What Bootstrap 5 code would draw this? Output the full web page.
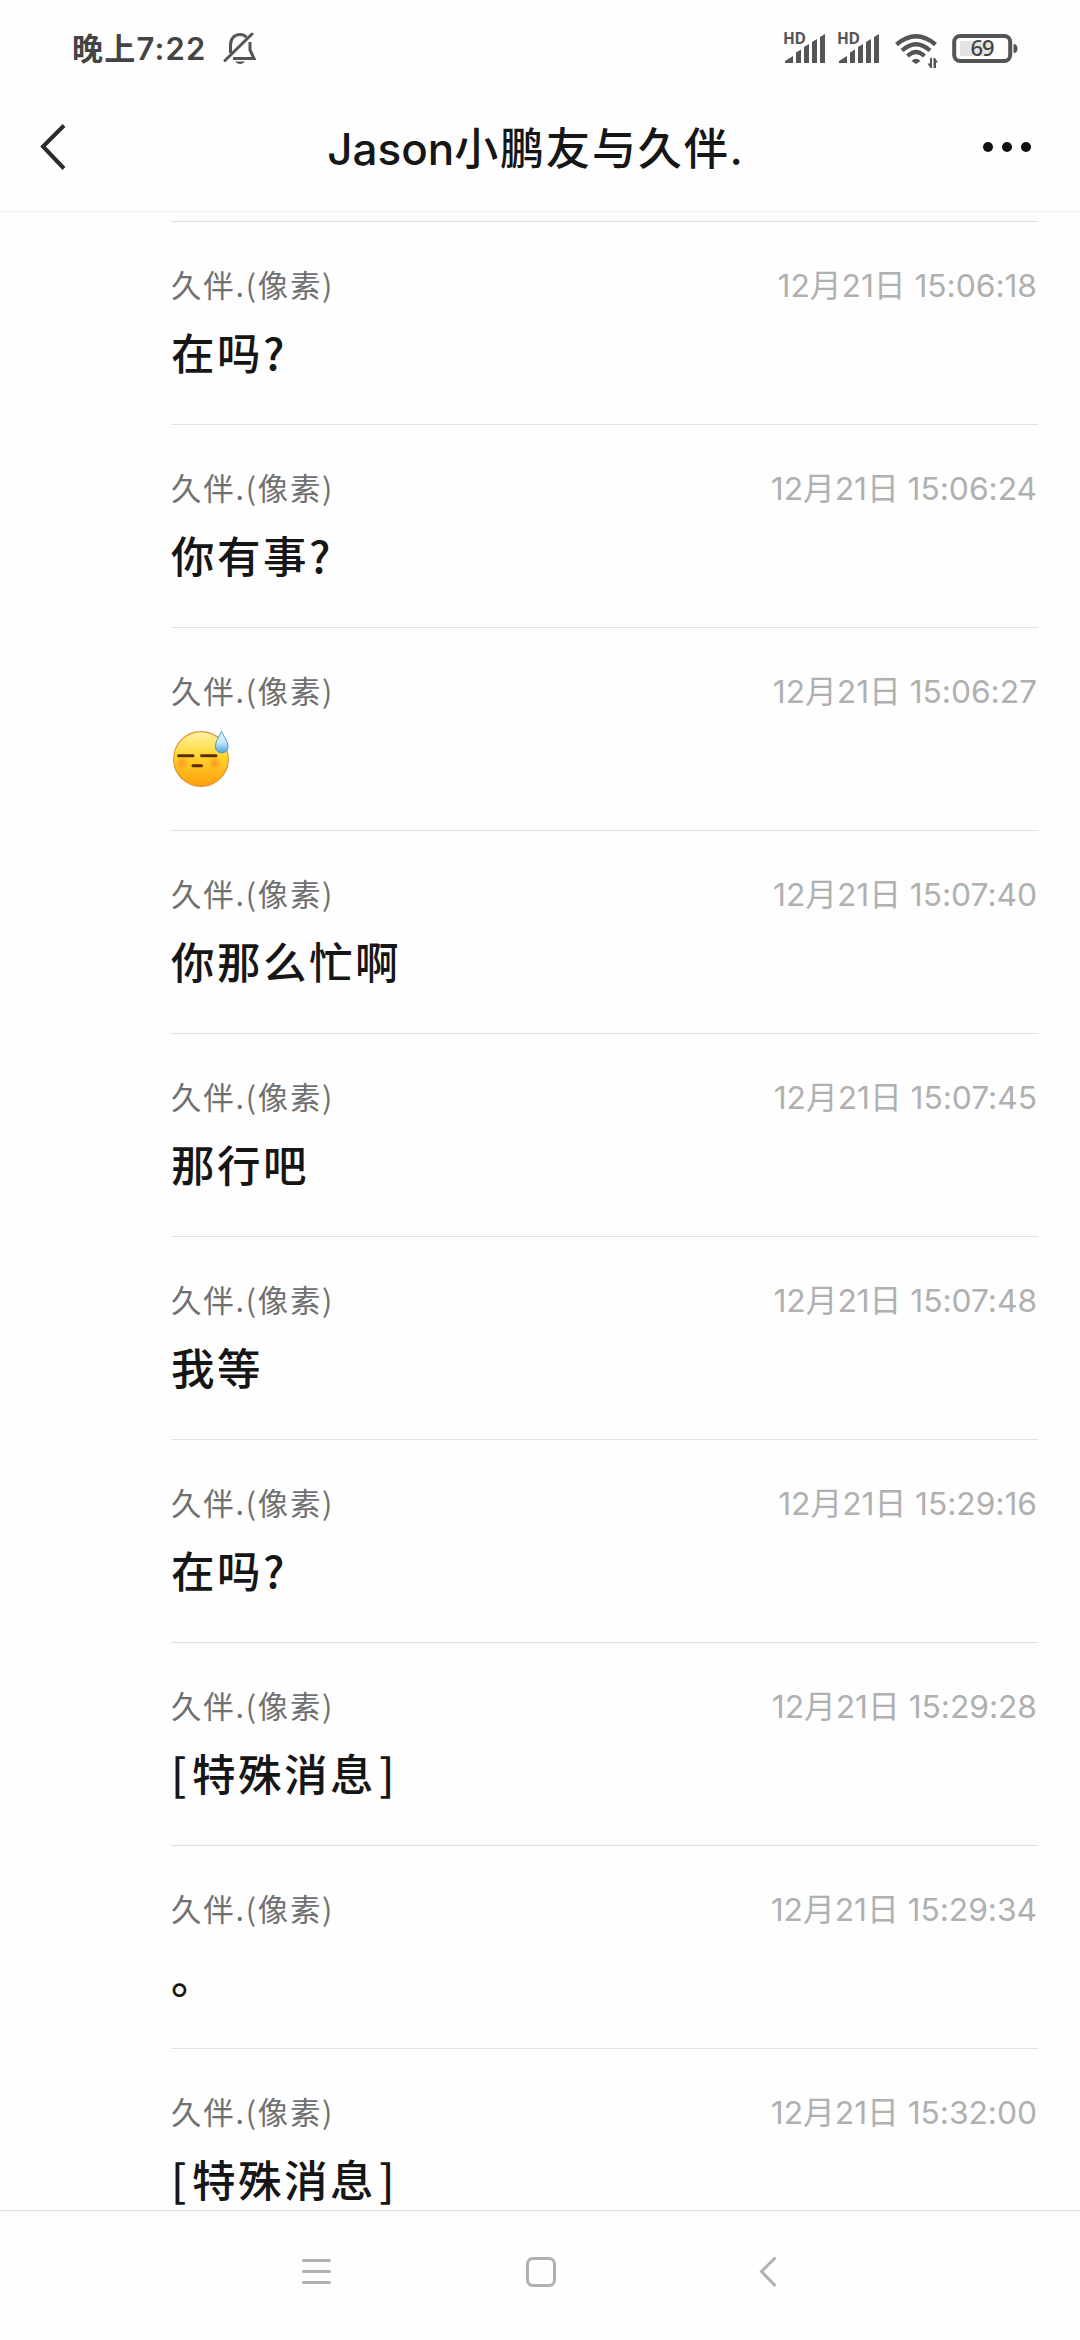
<!DOCTYPE html>
<html lang="zh-CN">
<head>
<meta charset="utf-8">
<meta name="viewport" content="width=device-width, initial-scale=1">
<title>Jason小鹏友与久伴.</title>
<link href="https://cdn.jsdelivr.net/npm/bootstrap@5.3.0/dist/css/bootstrap.min.css" rel="stylesheet">
<style>
  body { background: #fefefe; color: #161616; font-family: "Inter", "Noto Sans CJK SC", sans-serif; }
  .screen { width: 1080px; height: 2340px; }
  .status { height: 96px; padding: 1px 62px 0 72px; color: #444; }
  .clock { font-size: 31px; line-height: 40px; letter-spacing: 1.2px; font-weight: 600; }
  .title-bar { height: 116px; padding: 0 48px 14px 40px; border-bottom: 1px solid #f3f3f3; }
  .title-text { font-size: 44px; line-height: 60px; letter-spacing: 1.9px; font-weight: 500; color: #161616; margin-top: 4px; }
  .latin { letter-spacing: 0; }
  .feed { padding: 9px 42px 0 171px; }
  .message { height: 203px; padding-top: 42px; border-bottom: 1px solid #e1e1e1; }
  .feed-top { height: 1px; background: #e1e1e1; }
  .sender { font-size: 30.4px; line-height: 40px; letter-spacing: 1.8px; color: #707070; font-family: "Noto Sans CJK SC", sans-serif; font-weight: 400; }
  .sent-at { font-size: 31.8px; line-height: 40px; letter-spacing: -0.05px; color: #b0b0b0; font-weight: 400; padding: 2px 1px 0 0; margin-bottom: -2px; }
  .content { font-size: 43.5px; line-height: 60px; letter-spacing: 2.5px; margin-top: 18px; font-weight: 500; font-family: "Noto Sans CJK SC", sans-serif; }
  .open-bracket { margin-right: 3px; }
  .close-bracket { margin-left: 3px; }
  .nav-keys { height: 130px; border-top: 1px solid #e1e1e1; background: #fefefe; }
</style>
</head>
<body>
<div class="screen d-flex flex-column overflow-hidden">
  <header class="status d-flex align-items-center justify-content-between flex-shrink-0">
    <div class="d-flex align-items-center">
      <span class="clock">晚上7:22</span>
      <svg class="ms-3" width="34" height="34" viewBox="0 0 34 34" fill="none" stroke="#555" stroke-width="3">
        <path d="M7.500 21V13C7.500 7 11 2.500 17 2.500c3 0 5 1 6.500 2.800M27 10v8l4 8.500H10"/>
        <path d="M2 28.500L29 2" stroke-linecap="round"/>
        <path d="M12 29.500h10q-5 5-10 0z" fill="#555" stroke="none"/>
      </svg>
    </div>
    <svg width="236" height="42" viewBox="780 27 236 42" fill="#555">
      <g id="signal">
        <text x="781" y="43" font-family="Open Sans" font-weight="700" font-size="15.500" textLength="23">HD</text>
        <path d="M783 62v-2l8-5v7zM794 62V51.500l5-3V62zM802 62V46l5-3v19zM810 62V41l5-3v24zM818 62V36l5-3v29z"/>
      </g>
      <use href="#signal" x="54"/>
      <g fill="none" stroke="#555" stroke-width="4.300">
        <path d="M894.500 43.500q19.500-16.500 39 0M900 49.500q14-12.500 28 0M905.500 55q8.500-8 17 0"/>
      </g>
      <path d="M909.500 60q4.500-4.500 9 0l-4.500 3z"/>
      <path d="M928 57h2v10h-1.500l-3-4.500h2.500zM931.500 57h1.500l3 4.500H934V67h-2.500z"/>
      <rect x="952.200" y="35" width="56" height="25" rx="6" fill="none" stroke="#555" stroke-width="4"/>
      <rect x="958" y="40" width="31" height="15" rx="1.500" fill="#e3e3e3"/>
      <path d="M1011.500 43q4 0 4 4.500t-4 4.500z"/>
      <text x="968.500" y="55" font-family="Noto Sans" font-weight="500" font-size="22" fill="#444" textLength="24">69</text>
    </svg>
  </header>

  <nav class="title-bar d-flex align-items-center justify-content-between flex-shrink-0">
    <svg width="50" height="48" viewBox="0 0 50 48" fill="none" stroke="#2b2b2b" stroke-width="4"><path d="M24 2.500L3 23.500 24 45.500"/></svg>
    <span class="title-text"><span class="latin">Jason</span>小鹏友与久伴.</span>
    <svg width="50" height="12" viewBox="0 0 50 12" fill="#111"><circle cx="6" cy="6" r="5"/><circle cx="25" cy="6" r="5"/><circle cx="44" cy="6" r="5"/></svg>
  </nav>

  <main class="feed flex-grow-1 overflow-hidden">
    <div class="feed-top"></div>
    <article class="message">
      <div class="d-flex justify-content-between"><span class="sender">久伴.(像素)</span><time class="sent-at">12月21日 15:06:18</time></div>
      <div class="content">在吗?</div>
    </article>
    <article class="message">
      <div class="d-flex justify-content-between"><span class="sender">久伴.(像素)</span><time class="sent-at">12月21日 15:06:24</time></div>
      <div class="content">你有事?</div>
    </article>
    <article class="message">
      <div class="d-flex justify-content-between"><span class="sender">久伴.(像素)</span><time class="sent-at">12月21日 15:06:27</time></div>
      <div class="content d-flex">
        <svg width="60" height="60" viewBox="0 0 60 60">
          <defs>
            <linearGradient id="face" x2="0" y2="1"><stop stop-color="#fff3a8"/><stop offset=".45" stop-color="#ffd52e"/><stop offset="1" stop-color="#ff9d0b"/></linearGradient>
            <linearGradient id="drop" x2="0" y2="1"><stop stop-color="#e4f6ff"/><stop offset=".5" stop-color="#c4e7fb"/><stop offset="1" stop-color="#4ba3e3"/></linearGradient>
            <radialGradient id="blush"><stop stop-color="#ff7a22" stop-opacity=".65"/><stop offset="1" stop-color="#ff7a22" stop-opacity="0"/></radialGradient>
          </defs>
          <circle cx="30" cy="31" r="27.300" fill="url(#face)" stroke="#e5912a" stroke-width="1.200"/>
          <circle cx="11" cy="35" r="7" fill="url(#blush)"/><circle cx="44" cy="35" r="7" fill="url(#blush)"/>
          <path d="M7.500 27.700H22M30.500 27.700H45M22 37.700h8.500" stroke="#5b2c08" stroke-width="3" stroke-linecap="round"/>
          <path d="M50.500 3.500C47 10 44.500 14 44.500 18.500c0 8.500 12.500 8.500 12.500 0 0-4.500-3.500-9-6.500-15z" fill="url(#drop)" stroke="#5593bd"/>
        </svg>
      </div>
    </article>
    <article class="message">
      <div class="d-flex justify-content-between"><span class="sender">久伴.(像素)</span><time class="sent-at">12月21日 15:07:40</time></div>
      <div class="content">你那么忙啊</div>
    </article>
    <article class="message">
      <div class="d-flex justify-content-between"><span class="sender">久伴.(像素)</span><time class="sent-at">12月21日 15:07:45</time></div>
      <div class="content">那行吧</div>
    </article>
    <article class="message">
      <div class="d-flex justify-content-between"><span class="sender">久伴.(像素)</span><time class="sent-at">12月21日 15:07:48</time></div>
      <div class="content">我等</div>
    </article>
    <article class="message">
      <div class="d-flex justify-content-between"><span class="sender">久伴.(像素)</span><time class="sent-at">12月21日 15:29:16</time></div>
      <div class="content">在吗?</div>
    </article>
    <article class="message">
      <div class="d-flex justify-content-between"><span class="sender">久伴.(像素)</span><time class="sent-at">12月21日 15:29:28</time></div>
      <div class="content"><span class="open-bracket">[</span>特殊消息<span class="close-bracket">]</span></div>
    </article>
    <article class="message">
      <div class="d-flex justify-content-between"><span class="sender">久伴.(像素)</span><time class="sent-at">12月21日 15:29:34</time></div>
      <div class="content">。</div>
    </article>
    <article class="message">
      <div class="d-flex justify-content-between"><span class="sender">久伴.(像素)</span><time class="sent-at">12月21日 15:32:00</time></div>
      <div class="content"><span class="open-bracket">[</span>特殊消息<span class="close-bracket">]</span></div>
    </article>
  </main>

  <footer class="nav-keys flex-shrink-0">
    <svg class="d-block" width="1080" height="129" viewBox="0 2211 1080 129" fill="none" stroke="#b0b0b0" stroke-width="3">
      <path d="M303.500 2260.500h26M303.500 2271.500h26M303.500 2282.500h26" stroke-linecap="round"/>
      <rect x="527.500" y="2258.500" width="27" height="27" rx="5.500"/>
      <path d="M775.500 2257.500L761.500 2271.500 775.500 2286"/>
    </svg>
  </footer>
</div>
<script src="https://cdn.jsdelivr.net/npm/bootstrap@5.3.0/dist/js/bootstrap.bundle.min.js"></script>
</body>
</html>
